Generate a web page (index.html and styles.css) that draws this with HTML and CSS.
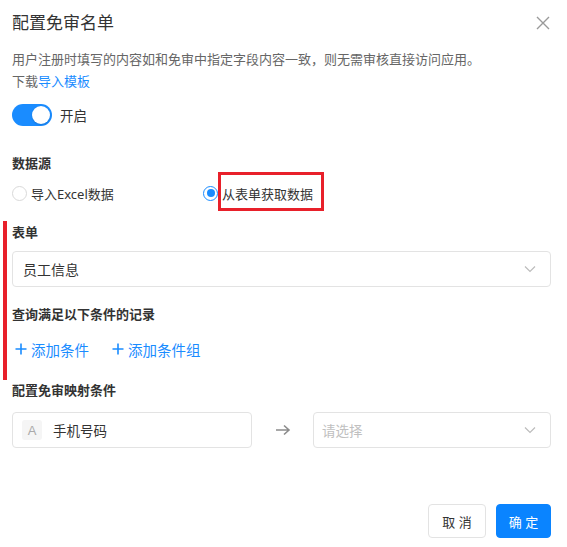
FILE: index.html
```html
<!DOCTYPE html>
<html lang="zh">
<head>
<meta charset="utf-8">
<link rel="stylesheet" href="styles.css">
</head>
<body>
<div class="dialog">
  <div class="header">
    <div class="title">配置免审名单</div>
    <svg class="close" width="14" height="14" viewBox="0 0 14 14"><path d="M1 1L13 13M13 1L1 13" stroke="#9a9a9a" stroke-width="1.4" fill="none"/></svg>
  </div>
  <div class="desc">用户注册时填写的内容如和免审中指定字段内容一致，则无需审核直接访问应用。</div>
  <div class="desc">下载<span class="link">导入模板</span></div>
  <div class="switch-row">
    <span class="switch"><span class="knob"></span></span>
    <span class="switch-label">开启</span>
  </div>

  <div class="label first">数据源</div>
  <div class="radios">
    <label class="radio"><span class="dot"></span>导入Excel数据</label>
    <label class="radio checked"><span class="dot"></span>从表单获取数据<span class="mark"></span></label>
  </div>

  <div class="section">
    <span class="bar"></span>
    <div class="label">表单</div>
    <div class="select">
      <span>员工信息</span>
      <svg class="chev" width="12" height="8" viewBox="0 0 12 8"><path d="M1 1.5L6 6.5L11 1.5" stroke="#bcbcbc" stroke-width="1.2" fill="none"/></svg>
    </div>
    <div class="label q">查询满足以下条件的记录</div>
    <div class="adds">
      <span class="add"><svg width="12" height="12" viewBox="0 0 12 12"><path d="M6 0.5V11.5M0.5 6H11.5" stroke="#1a8cff" stroke-width="1.6"/></svg>添加条件</span>
      <span class="add"><svg width="12" height="12" viewBox="0 0 12 12"><path d="M6 0.5V11.5M0.5 6H11.5" stroke="#1a8cff" stroke-width="1.6"/></svg>添加条件组</span>
    </div>
  </div>

  <div class="label map">配置免审映射条件</div>
  <div class="map-row">
    <div class="field"><span class="badge">A</span>手机号码</div>
    <svg class="arrow" width="16" height="12" viewBox="0 0 16 12"><path d="M1 6H14M9 1.5L14 6L9 10.5" stroke="#8c8c8c" stroke-width="1.6" fill="none"/></svg>
    <div class="select small">
      <span class="ph">请选择</span>
      <svg class="chev" width="12" height="8" viewBox="0 0 12 8"><path d="M1 1.5L6 6.5L11 1.5" stroke="#bcbcbc" stroke-width="1.2" fill="none"/></svg>
    </div>
  </div>

  <div class="footer">
    <button class="btn">取 消</button>
    <button class="btn primary">确 定</button>
  </div>
</div>
</body>
</html>
```
FILE: styles.css
```css
* { box-sizing: border-box; }
html, body { margin: 0; padding: 0; background: #fff; }
body {
  font-family: "Noto Sans", "Noto Sans CJK SC", sans-serif;
  color: #333;
  font-size: 13px;
}
.dialog { padding: 11px 16px 0 12px; width: 567px; height: 547px; position: relative; }
.header { display: flex; justify-content: space-between; align-items: center; height: 24px; }
.title { font-size: 17px; line-height: 24px; color: #333; }
.close { margin-right: 1px; }
.desc { font-size: 13px; line-height: 22px; color: #666; }
.header + .desc { margin-top: 13px; }
.link { color: #1a8cff; }
.switch-row { display: flex; align-items: center; margin-top: 12px; height: 22px; }
.switch { width: 40px; height: 22px; border-radius: 11px; background: #1a8cff; position: relative; display: inline-block; }
.knob { position: absolute; right: 2px; top: 2px; width: 18px; height: 18px; border-radius: 50%; background: #fff; box-shadow: 0 1px 2px rgba(0,0,0,0.15); }
.switch-label { margin-left: 8px; color: #333; font-size: 13.5px; }
.label { font-weight: 600; color: #333; line-height: 20px; font-size: 13px; }
.label.first { margin-top: 27px; }
.radios { display: flex; margin-top: 10px; height: 20px; align-items: center; }
.radio { display: flex; align-items: center; color: #333; position: relative; }
.radio:first-child { width: 191px; }
.dot { width: 15px; height: 15px; border-radius: 50%; border: 1px solid #d9d9d9; margin-right: 4px; position: relative; }
.checked .dot { border-color: #1a8cff; }
.checked .dot::after { content: ""; position: absolute; left: 2.5px; top: 2.5px; width: 8px; height: 8px; border-radius: 50%; background: #1a8cff; }
.mark { position: absolute; left: 15px; top: -12px; width: 106px; height: 39px; border: 3px solid #e8202a; }
.section { position: relative; margin-top: 19px; }
.bar { position: absolute; left: -9px; top: -1px; width: 4px; height: 159px; background: #e8202a; }
.select {
  margin-top: 9px; height: 36px; border: 1px solid #e3e3e3; border-radius: 4px;
  display: flex; align-items: center; justify-content: space-between; padding: 0 14px 0 10px; color: #333; font-size: 14px;
}
.label.q { margin-top: 17px; }
.adds { display: flex; margin-top: 15px; height: 20px; align-items: center; color: #1a8cff; font-size: 14.5px; }
.add { display: flex; align-items: center; margin-left: 3px; }
.add svg { margin-right: 4px; }
.add + .add { margin-left: 23px; }
.label.map { margin-top: 21px; }
.map-row { display: flex; align-items: center; margin-top: 12px; }
.field { width: 240px; height: 36px; border: 1px solid #e3e3e3; border-radius: 4px; display: flex; align-items: center; padding-left: 9px; color: #333; font-size: 13.5px; }
.badge { width: 20px; height: 20px; background: #f5f5f5; border-radius: 3px; color: #aaa; font-family: "Liberation Sans", sans-serif; font-size: 13px; display: flex; align-items: center; justify-content: center; margin-right: 11px; }
.arrow { margin: 0 22px 0 23px; }
.select.small { margin-top: 0; flex: 1; padding-left: 8px; font-size: 13.5px; }
.ph { color: #c0c0c0; }
.footer { position: absolute; right: 16px; bottom: 9px; display: flex; gap: 10px; }
.btn { height: 34px; padding: 0; border-radius: 4px; font-family: inherit; font-size: 13px; border: 1px solid #e3e3e3; background: #fff; color: #333; width: 58px; }
.btn.primary { background: #0a84ff; border-color: #0a84ff; color: #fff; width: 55px; }
```
